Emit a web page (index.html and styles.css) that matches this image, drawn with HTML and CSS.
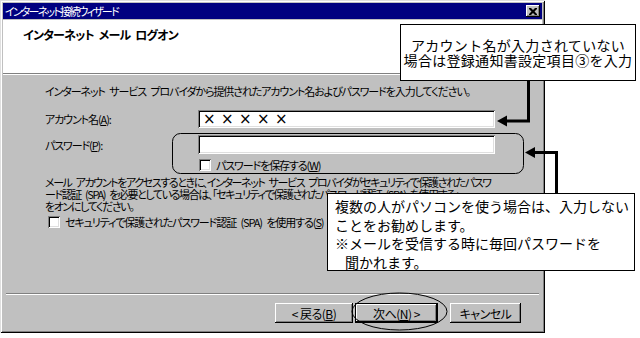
FILE: index.html
```html
<!DOCTYPE html>
<html lang="ja">
<head>
  <meta charset="UTF-8" />
  <title>インターネット接続ウィザード</title>
  <link rel="stylesheet" href="styles.css">
</head>
<body>
  <div class="window">
    <div class="titlebar">
      <span class="title">インターネット接続ウィザード</span>
      <span class="close-btn">
        <svg width="8" height="7" viewBox="0 0 8 7"><path d="M0 0h2l2 2 2-2h2v1l-2.5 2.5L8 6v1H6L4 5 2 7H0V6l2.5-2.5L0 1z" fill="#000"/></svg>
      </span>
    </div>
    <div class="header">
      <h1>インターネット メール ログオン</h1>
    </div>

    <div class="content">
      <p class="intro">インターネット サービス プロバイダから提供されたアカウント名およびパスワードを入力してください。</p>

      <div class="field">
        <label>アカウント名(<u>A</u>):</label>
        <div class="textbox"><span class="mask">×</span><span class="mask">×</span><span class="mask">×</span><span class="mask">×</span><span class="mask">×</span></div>
      </div>
      <div class="field pw">
        <label>パスワード(<u>P</u>):</label>
        <div class="textbox"></div>
      </div>
      <div class="check save"><span class="box"></span><span>パスワードを保存する(<u>W</u>)</span></div>

      <p class="note">メール アカウントをアクセスするときに、インターネット サービス プロバイダがセキュリティで保護されたパスワ<br>ード認証 (SPA) を必要としている場合は、「セキュリティで保護されたパスワード認証 (SPA) を使用する」<br>をオンにしてください。</p>

      <div class="check spa"><span class="box"></span><span>セキュリティで保護されたパスワード認証 (SPA) を使用する(<u>S</u>)</span></div>
    </div>

    <div class="separator"></div>
    <div class="buttons">
      <button class="btn back">&lt; 戻る(<u>B</u>)</button>
      <button class="btn next">次へ(<u>N</u>) &gt;</button>
      <button class="btn cancel">キャンセル</button>
    </div>
  </div>

  <svg class="marks" width="640" height="338" viewBox="0 0 640 338">
    <rect x="172.5" y="133.5" width="351" height="40" rx="8" fill="none" stroke="#000"/>
    <ellipse cx="399.5" cy="311.5" rx="47.5" ry="18.5" fill="none" stroke="#000"/>
    <polyline points="528.5,81 528.5,121 505,121" fill="none" stroke="#000" stroke-width="3"/>
    <polygon points="497,121 507,115.5 507,126.5" fill="#000"/>
    <polyline points="556.5,193 556.5,152.5 533,152.5" fill="none" stroke="#000" stroke-width="3"/>
    <polygon points="525,152.5 535,147 535,158" fill="#000"/>
  </svg>

  <div class="callout callout-top">
    <p>アカウント名が入力されていない</p>
    <p>場合は登録通知書設定項目③を入力</p>
  </div>
  <div class="callout callout-bottom">
    <p>複数の人がパソコンを使う場合は、入力しない</p>
    <p>ことをお勧めします。</p>
    <p>※メールを受信する時に毎回パスワードを</p>
    <p class="indent">聞かれます。</p>
  </div>
</body>
</html>
```

FILE: styles.css
```css
body {
  margin: 0;
  width: 640px;
  height: 338px;
  position: relative;
  overflow: hidden;
  background: #fff;
  color: #000;
  font-family: "Noto Sans CJK JP", sans-serif;
  font-size: 12px;
  line-height: 12px;
}
p {
  margin: 0;
}
.window {
  width: 545px;
  height: 333px;
  box-sizing: border-box;
  padding: 3px;
  display: flex;
  flex-direction: column;
  background: #c0c0c0;
  box-shadow: inset 1px 1px #dfdfdf, inset -1px -1px #000, inset 2px 2px #fff, inset -2px -2px #808080;
  font-size: 11px;
  letter-spacing: -1.1px;
  word-spacing: 3px;
  font-feature-settings: "palt";
  white-space: nowrap;
}
.titlebar {
  height: 16px;
  padding: 0 2px;
  display: flex;
  align-items: center;
  justify-content: space-between;
  background: #000080;
  color: #fff;
}
.titlebar .title {
  letter-spacing: -1.8px;
}
.close-btn {
  width: 14px;
  height: 12px;
  display: flex;
  align-items: center;
  justify-content: center;
  background: #c0c0c0;
  box-shadow: inset -1px -1px #000, inset 1px 1px #fff, inset -2px -2px #808080;
}
.header {
  height: 53px;
  margin-top: 1px;
  background: #fff;
  border-bottom: 1px solid #808080;
  box-shadow: 0 1px #fff;
}
.header h1 {
  margin: 0;
  padding: 9px 0 0 20px;
  font-size: 12px;
  font-weight: bold;
  letter-spacing: -0.8px;
}
.content {
  flex: 1;
  padding: 11px 0 0 42px;
  display: flex;
  flex-direction: column;
}
.field {
  display: flex;
  align-items: center;
  margin-top: 13px;
}
.field label {
  width: 153px;
}
.field.pw {
  margin-top: 7px;
}
.textbox {
  width: 297px;
  height: 18px;
  box-sizing: border-box;
  padding-left: 5px;
  display: flex;
  align-items: center;
  background: #fff;
  box-shadow: inset 1px 1px #808080, inset -1px -1px #fff, inset 2px 2px #000, inset -2px -2px #dfdfdf;
}
.field.pw .textbox {
  height: 19px;
}
.mask {
  width: 18px;
  font-size: 15px;
  font-family: "DejaVu Sans", sans-serif;
  line-height: 16px;
  letter-spacing: 0;
}
.check {
  display: flex;
  align-items: center;
  gap: 5px;
}
.check .box {
  width: 12px;
  height: 12px;
  box-sizing: border-box;
  background: #fff;
  box-shadow: inset 1px 1px #808080, inset -1px -1px #fff, inset 2px 2px #000, inset -2px -2px #dfdfdf;
}
.check.save {
  margin: 5px 0 0 154px;
}
.note {
  margin-top: 5px;
  letter-spacing: -1.4px;
}
.check.spa {
  margin: 4px 0 0 3px;
}
.separator {
  height: 1px;
  margin: 0 3px;
  background: #808080;
  border-bottom: 1px solid #fff;
}
.buttons {
  display: flex;
  justify-content: flex-end;
  padding: 8px 21px 7px 0;
}
.btn {
  height: 20px;
  padding: 0;
  border: none;
  background: #c0c0c0;
  font-family: inherit;
  font-size: 12px;
  letter-spacing: -0.5px;
  font-feature-settings: "palt";
  box-shadow: inset -1px -1px #000, inset 1px 1px #fff, inset -2px -2px #808080;
}
.btn.back {
  width: 78px;
}
.btn.next {
  width: 83px;
  margin-left: 2px;
  box-shadow: inset 0 0 0 1px #000, inset -2px -2px #000, inset 2px 2px #fff, inset -3px -3px #808080;
}
.btn.cancel {
  width: 71px;
  margin-left: 12px;
}
.marks {
  position: absolute;
  top: 0;
  left: 0;
  pointer-events: none;
}
.callout {
  position: absolute;
  box-sizing: border-box;
  background: #fff;
  border: 1px solid #000;
  font-size: 14px;
}
.callout-top {
  left: 400px;
  top: 24px;
  width: 236px;
  height: 57px;
  display: flex;
  flex-direction: column;
  justify-content: center;
  align-items: center;
  line-height: 15px;
  letter-spacing: 0.3px;
}
.callout-bottom {
  left: 327px;
  top: 193px;
  width: 308px;
  height: 78px;
  padding: 3px 0 0 7px;
  line-height: 18.5px;
}
.callout-bottom .indent {
  padding-left: 10px;
}
```
